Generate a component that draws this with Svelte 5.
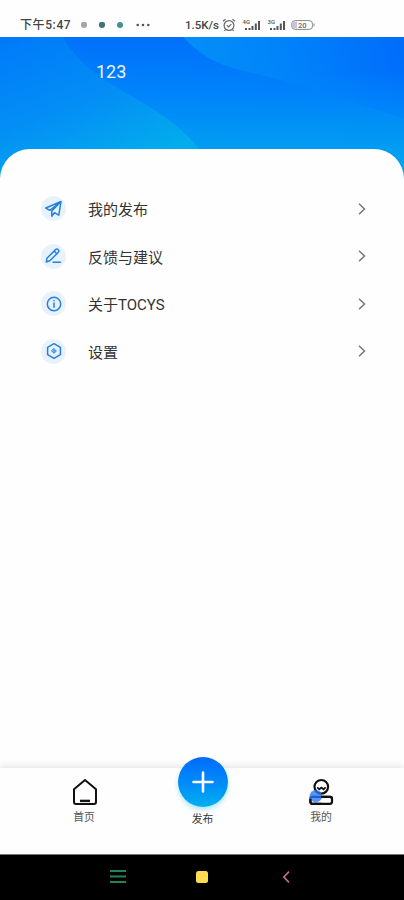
<script>
	const items = [
		{ icon: 'send', label: '我的发布' },
		{ icon: 'edit', label: '反馈与建议' },
		{ icon: 'info', label: '关于TOCYS' },
		{ icon: 'settings', label: '设置' }
	];

	const signals = ['4G', '3G'];
</script>

<div class="page">
	<div class="status">
		<span class="time">下午5:47</span>
		<div class="notices">
			<i class="notice"></i>
			<i class="notice dark"></i>
			<i class="notice teal"></i>
		</div>
		<svg class="more" width="14" height="4" viewBox="0 0 14 4" fill="#555">
			<circle cx="1.7" cy="2" r="1.3" />
			<circle cx="7" cy="2" r="1.3" />
			<circle cx="12.3" cy="2" r="1.3" />
		</svg>
		<span class="speed">1.5K/s</span>
		<svg class="alarm" width="14" height="14" viewBox="0 0 14 14" fill="none" stroke="#666" stroke-width="1.2">
			<circle cx="7" cy="7.5" r="4.9" />
			<path d="M1 3.2 3.5 1.2M13 3.2 10.5 1.2M4.8 7.2 6.6 9 9.3 6.2M3.5 11.5 2.5 13M10.5 11.5 11.5 13" />
		</svg>
		{#each signals as signal}
			<svg class="signal" width="20" height="14" viewBox="0 0 20 14" fill="#555">
				<text x="0.5" y="5.5" font-size="6">{signal}</text>
				<path d="M3 10h2v2H3zM6.5 10h2v2h-2zM9.5 8h2v4h-2zM12.8 5.5h2V12h-2zM16 3h2v9h-2z" />
			</svg>
		{/each}
		<svg class="battery" width="24" height="10" viewBox="0 0 24 10">
			<rect x="0.6" y="0.6" width="21" height="8.8" rx="3.6" fill="#fff" stroke="#888" />
			<path d="M4 1.5h2v7H4a3 3 0 0 1 0-7z" fill="#c7c5dc" />
			<path d="M23 3.5v3" stroke="#888" />
			<text x="7" y="7.7" font-size="7.5" fill="#666">20</text>
		</svg>
	</div>

	<header>
		<svg class="waves" viewBox="0 0 404 144" preserveAspectRatio="none">
			<defs>
				<linearGradient id="base" x1="0.5" y1="0" x2="0.46" y2="1">
					<stop offset="0" stop-color="#0070fb" />
					<stop offset="0.4" stop-color="#0084fa" />
					<stop offset="0.75" stop-color="#029cf2" />
					<stop offset="1" stop-color="#02abef" />
				</linearGradient>
				<linearGradient id="left" x1="0.1" y1="0" x2="0.6" y2="1">
					<stop offset="0" stop-color="#007bf8" />
					<stop offset="0.5" stop-color="#048ff5" />
					<stop offset="0.9" stop-color="#02aced" />
				</linearGradient>
				<linearGradient id="right" x1="0" y1="0.2" x2="1" y2="0.1">
					<stop offset="0" stop-color="#0490f7" />
					<stop offset="0.5" stop-color="#0081fa" />
					<stop offset="1" stop-color="#006dfb" />
				</linearGradient>
				<linearGradient id="fade" x1="0" y1="0" x2="0" y2="1">
					<stop offset="0.4" stop-color="#0088fa" stop-opacity="0" />
					<stop offset="1" stop-color="#0088fa" />
				</linearGradient>
			</defs>
			<rect width="404" height="144" fill="url(#base)" />
			<path d="M0 0H63C77 25 98 39 121 53C153 72 178 84 204 118V144H0z" fill="url(#left)" />
			<path d="M183 0C199 17 216 27 240 33C289 44 337 60 404 81V0z" fill="url(#right)" />
			<path d="M183 0C199 17 216 27 240 33C289 44 337 60 404 81V0z" fill="url(#fade)" />
		</svg>
		<span class="name">123</span>
	</header>

	<main>
		{#each items as item}
			<div class="item">
				<span class="badge">
					<svg width="18" height="18" viewBox="0 0 18 18" fill="none" stroke="#2680e0" stroke-width="1.5" stroke-linecap="round" stroke-linejoin="round">
						{#if item.icon === 'send'}
							<path d="M16 1.5 .8 8l4 2.3L16 1.5 6.8 11v5.3l2.6-3.6 4.4 2.5L16 1.5" />
						{:else if item.icon === 'edit'}
							<path d="M1.3 15l.6-3.7 8.7-8.7a1.6 1.6 0 0 1 2.4 0l.3.3a1.6 1.6 0 0 1 0 2.4l-8.5 8.5L1.3 15M9.3 4.3l2.7 2.7M8 15.3h7.5" />
						{:else if item.icon === 'info'}
							<circle cx="9" cy="9" r="6.7" />
							<path d="M9 7.9v4.4M9 5.5v.2" />
						{:else}
							<path d="M9 1.7 15.4 5.3v7.4L9 16.3 2.6 12.7V5.3z" />
							<path d="M9 6.6 11.4 9 9 11.4 6.6 9z" fill="#69a7e8" stroke-width="0.8" />
						{/if}
					</svg>
				</span>
				<span class="label">{item.label}</span>
				<svg class="arrow" width="8" height="14" viewBox="0 0 8 14" fill="none" stroke="#777" stroke-width="1.5">
					<path d="M1 1.7 6.5 7 1 12.3" />
				</svg>
			</div>
		{/each}
	</main>

	<nav>
		<div class="tab">
			<svg width="28" height="28" viewBox="0 0 28 28" fill="none" stroke="#111" stroke-width="2" stroke-linejoin="round">
				<path d="M15 2 26 11.2V24a2 2 0 0 1-2 2H6a2 2 0 0 1-2-2V11.2z" />
				<path d="M10 22.9h10" stroke-width="2.4" />
			</svg>
			<span>首页</span>
		</div>
		<div class="tab publish">
			<div class="plus">
				<svg width="22" height="22" viewBox="0 0 22 22" stroke="#fff" stroke-width="2.6" stroke-linecap="round">
					<path d="M11 1.5v19M1.5 11h19" />
				</svg>
			</div>
			<span>发布</span>
		</div>
		<div class="tab">
			<svg width="28" height="28" viewBox="0 0 28 28" fill="none" stroke="#111" stroke-width="2.2">
				<circle cx="14.3" cy="8.8" r="6.8" />
				<path d="M10.2 9.3l2.1 2 2.1-1.7 2.1 1.7 2.1-2" stroke-width="1.8" />
				<rect x="3.4" y="18.8" width="21.6" height="7" rx="2" />
				<circle cx="8.8" cy="18.2" r="6.2" fill="#2877fa" fill-opacity="0.78" stroke="none" />
				<path d="M14 18.8h9a2 2 0 0 1 2 2M3.4 21v2.8a2 2 0 0 0 2 2h9" />
			</svg>
			<span>我的</span>
		</div>
	</nav>

	<footer>
		<svg width="16" height="16" viewBox="0 0 16 16" stroke="#218453" stroke-width="2">
			<path d="M0 2h16M0 7.5h16M0 13h16" />
		</svg>
		<i class="square"></i>
		<svg width="16" height="16" viewBox="0 0 16 16" fill="none" stroke="#c4718a" stroke-width="1.6">
			<path d="M11 2.6 5.8 8 11 13.4" />
		</svg>
	</footer>
</div>

<style>
	:global(body) {
		margin: 0;
		background: #fff;
	}

	.page {
		display: flex;
		flex-direction: column;
		height: 900px;
		overflow: hidden;
		background: #fefefe;
		color: #333;
		font-family: Roboto, 'Noto Sans CJK SC', sans-serif;
	}

	.status {
		display: flex;
		align-items: center;
		box-sizing: border-box;
		height: 37px;
		padding: 12px 0 0 20px;
		color: #444;
		font-size: 12px;
		font-weight: 500;
		white-space: nowrap;
	}

	.time {
		width: 61px;
		letter-spacing: 0.6px;
		line-height: 16px;
	}

	.notices {
		display: flex;
		gap: 12px;
		width: 55px;
	}

	.notice {
		width: 6px;
		height: 6px;
		border-radius: 2px 2px 3px 3px;
		background: #a5a5a5;
	}

	.notice.dark {
		background: #44717a;
	}

	.notice.teal {
		border-radius: 50%;
		background: #3f9291;
	}

	.speed {
		width: 37px;
		margin-left: 35px;
		font-size: 11.5px;
	}

	.signal {
		margin-left: 6px;
	}

	.signal + .signal {
		margin-left: 5px;
	}

	.battery {
		margin-left: 4px;
	}

	header {
		display: grid;
		flex: none;
		height: 144px;
	}

	.waves {
		grid-area: 1 / 1;
		width: 100%;
		height: 144px;
	}

	.name {
		z-index: 1;
		grid-area: 1 / 1;
		padding: 24px 0 0 96px;
		color: #eaf5ff;
		font-size: 18px;
		line-height: 22px;
	}

	main {
		z-index: 1;
		flex: 1;
		margin-top: -32px;
		padding: 36px 38px 0 41px;
		border-radius: 30px 30px 0 0;
		background: #fefefe;
	}

	.item {
		display: flex;
		align-items: center;
		height: 47.5px;
	}

	.badge {
		display: flex;
		align-items: center;
		justify-content: center;
		width: 25px;
		height: 25px;
		border-radius: 50%;
		background: #e7f2fc;
	}

	.label {
		flex: 1;
		margin-left: 22px;
		padding-top: 3px;
		font-size: 15px;
		line-height: 22px;
	}

	nav {
		z-index: 1;
		display: flex;
		flex: none;
		justify-content: space-between;
		box-sizing: border-box;
		height: 86px;
		padding: 0 53px 0 54px;
		background: #fefefe;
		box-shadow: 0 -2px 7px rgba(0, 0, 0, 0.1);
	}

	.tab {
		display: flex;
		flex-direction: column;
		align-items: center;
		width: 60px;
		padding-top: 10px;
		color: #555;
		font-size: 10.8px;
		line-height: 16px;
	}

	.tab span {
		margin-top: 4px;
	}

	.publish {
		padding-top: 0;
		margin-top: -11px;
	}

	.plus {
		display: flex;
		align-items: center;
		justify-content: center;
		width: 50px;
		height: 50px;
		border-radius: 50%;
		background: linear-gradient(#006bfb, #008df9 55%, #00b0ee);
		box-shadow: 0 3px 5px rgba(0, 176, 238, 0.3);
	}

	.publish span {
		margin-top: 5px;
		color: #333;
	}

	footer {
		display: flex;
		flex: none;
		align-items: center;
		justify-content: center;
		gap: 70px;
		box-sizing: border-box;
		height: 46px;
		padding-bottom: 1px;
		border-top: 1px solid #777;
		background: #000;
		z-index: 1;
	}

	.square {
		width: 12px;
		height: 12px;
		border-radius: 2.5px;
		background: #fbdc51;
	}
</style>
